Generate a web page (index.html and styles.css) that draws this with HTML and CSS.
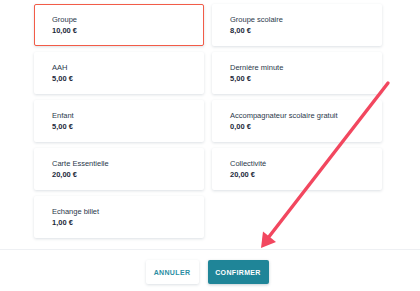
FILE: index.html
```html
<!DOCTYPE html>
<html lang="fr">
<head>
<meta charset="utf-8">
<link rel="stylesheet" href="styles.css">
</head>
<body>
<div class="page">
  <div class="grid">
    <div class="card selected"><div class="label">Groupe</div><div class="price">10,00 €</div></div>
    <div class="card"><div class="label">Groupe scolaire</div><div class="price">8,00 €</div></div>
    <div class="card"><div class="label">AAH</div><div class="price">5,00 €</div></div>
    <div class="card"><div class="label">Dernière minute</div><div class="price">5,00 €</div></div>
    <div class="card"><div class="label">Enfant</div><div class="price">5,00 €</div></div>
    <div class="card"><div class="label">Accompagnateur scolaire gratuit</div><div class="price">0,00 €</div></div>
    <div class="card"><div class="label">Carte Essentielle</div><div class="price">20,00 €</div></div>
    <div class="card"><div class="label">Collectivité</div><div class="price">20,00 €</div></div>
    <div class="card"><div class="label">Echange billet</div><div class="price">1,00 €</div></div>
  </div>
  <div class="footer">
    <button class="btn btn-cancel">ANNULER</button>
    <button class="btn btn-confirm">CONFIRMER</button>
  </div>
  <svg class="arrow" width="420" height="291" viewBox="0 0 420 291">
    <line x1="388" y1="83" x2="268" y2="238" stroke="#f2475f" stroke-width="3.4" stroke-linecap="round"/>
    <polygon points="261,248 263,231.5 276,242" fill="#f2475f"/>
  </svg>
</div>
</body>
</html>
```
FILE: styles.css
```css
html, body {
  margin: 0;
  padding: 0;
  background: #ffffff;
}
.page {
  position: relative;
  width: 420px;
  height: 291px;
  overflow: hidden;
  font-family: "Liberation Sans", Arial, sans-serif;
}
.grid {
  display: grid;
  grid-template-columns: 170px 170px;
  grid-auto-rows: 42px;
  column-gap: 8px;
  row-gap: 6px;
  padding: 4px 0 0 34px;
}
.card {
  box-sizing: border-box;
  background: #ffffff;
  border: 1px solid transparent;
  border-radius: 2px;
  box-shadow: 0 1px 3px rgba(40, 60, 90, 0.16);
  padding: 9px 17px 0;
  color: #2a384b;
}
.card.selected {
  border-color: #f25c48;
}
.label {
  font-size: 7.5px;
  line-height: 11px;
}
.price {
  font-size: 7.5px;
  line-height: 11px;
  font-weight: bold;
  color: #1d2a3b;
}
.footer {
  margin-top: 11px;
  border-top: 1px solid #eef0f3;
  display: flex;
  justify-content: center;
  gap: 9px;
  padding: 10px 6px 0 0;
}
.btn {
  font-family: "Liberation Sans", Arial, sans-serif;
  font-size: 7px;
  font-weight: bold;
  letter-spacing: 0.35px;
  height: 24px;
  border: none;
  border-radius: 2px;
  padding: 0;
  cursor: pointer;
}
.btn-cancel {
  width: 53px;
  background: #ffffff;
  color: #2b8ea3;
  box-shadow: 0 1px 3px rgba(40, 60, 90, 0.16);
}
.btn-confirm {
  width: 61px;
  background: #1f8598;
  color: #ffffff;
  box-shadow: 0 1px 3px rgba(20, 60, 80, 0.25);
}
.arrow {
  position: absolute;
  left: 0;
  top: 0;
  pointer-events: none;
}
```
